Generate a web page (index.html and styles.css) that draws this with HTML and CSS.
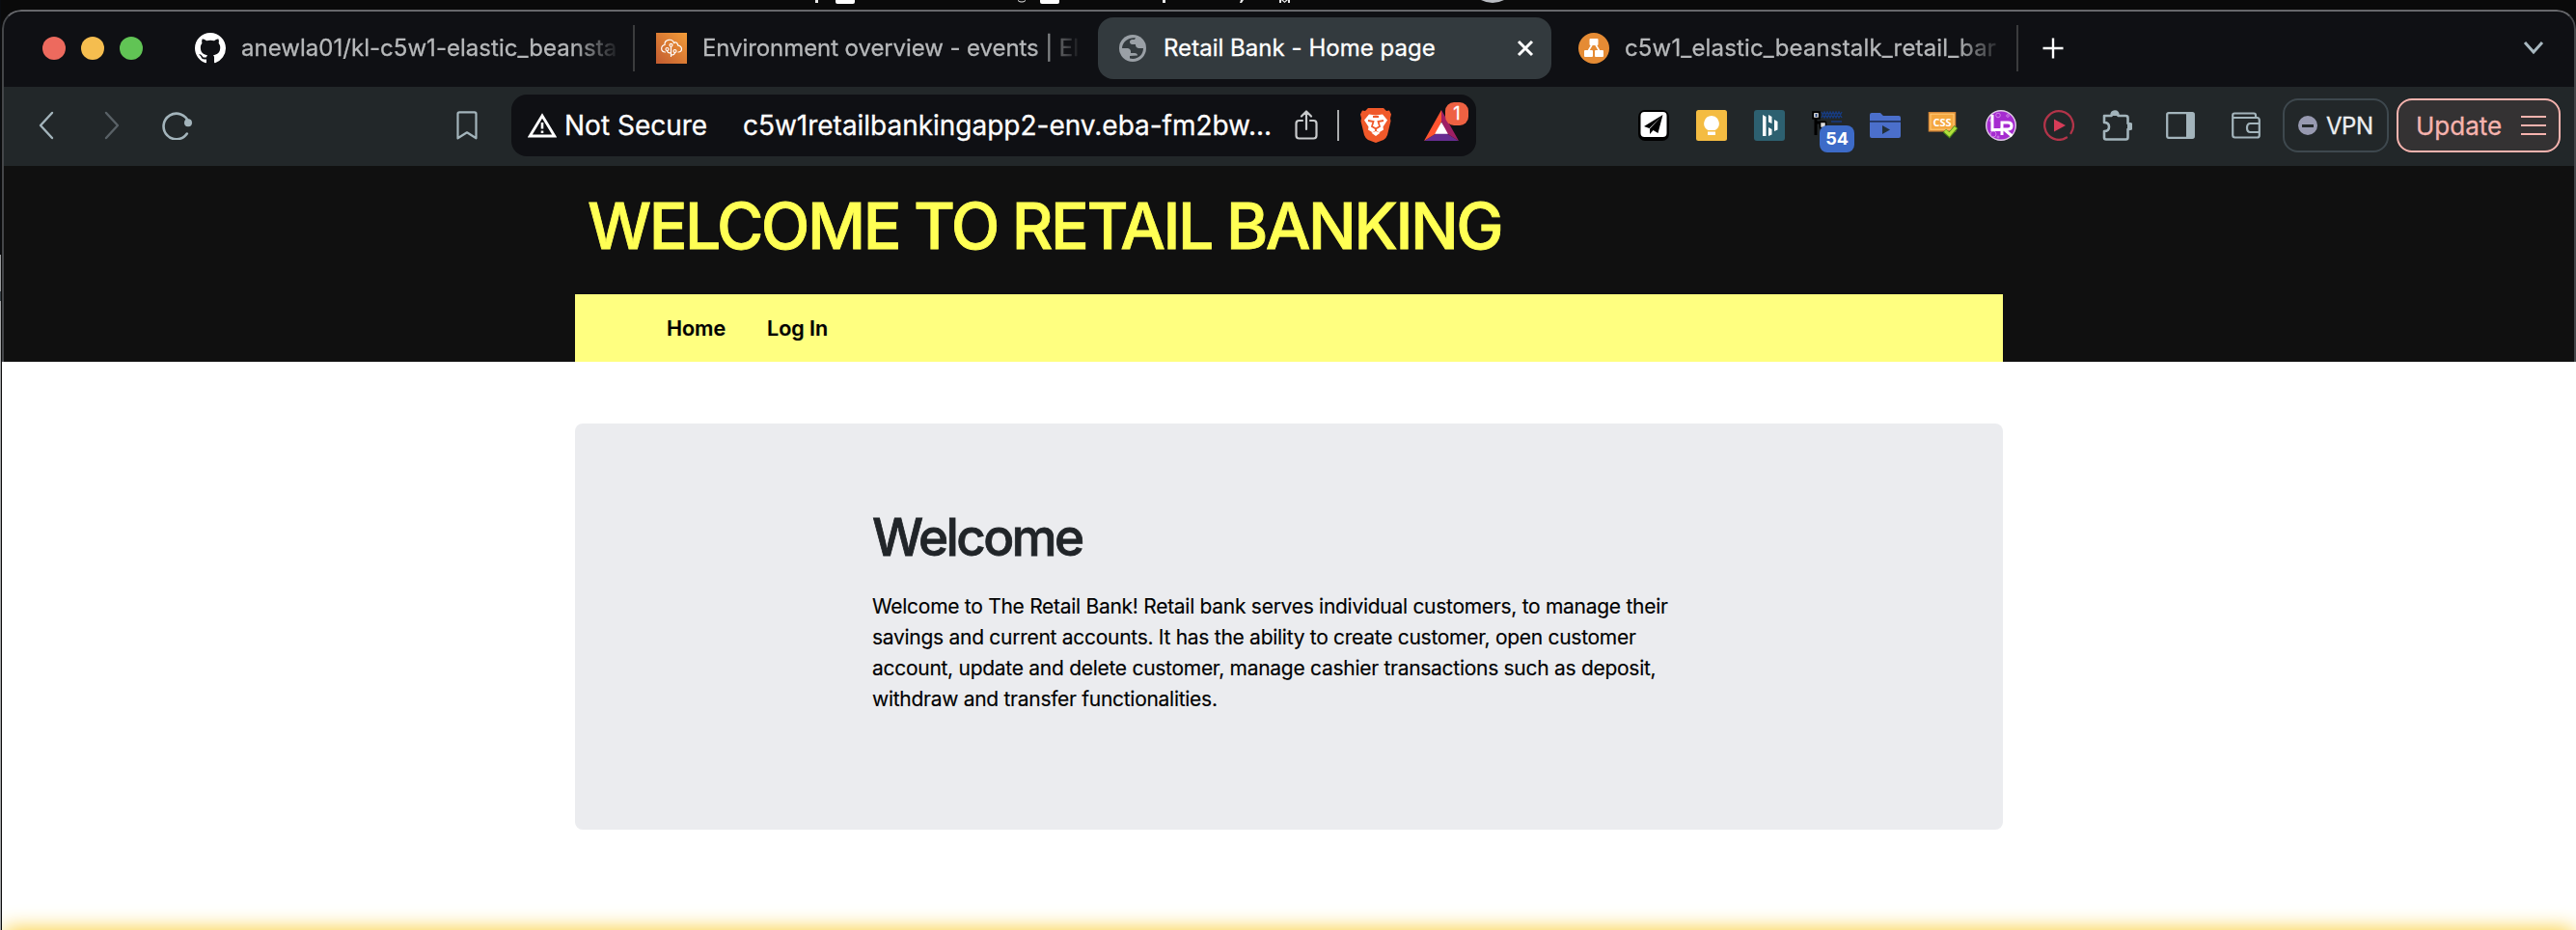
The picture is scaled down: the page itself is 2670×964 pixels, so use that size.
FILE: index.html
```html
<!DOCTYPE html>
<html lang="en">
<head>
<meta charset="utf-8">
<title>Retail Bank - Home page</title>
<link rel="stylesheet" href="styles.css">
</head>
<body>
<svg class="backdrop" viewBox="0 0 2670 10" width="2670" height="10">
  <g fill="#e8e8e8">
    <rect x="845" y="0" width="3" height="3"/><path d="M866 0h20v2q0 2-2 2h-16q-2 0-2-2z" fill="#fff"/>
    <path d="M1055 0q4 3 8 0v1q-4 3-8 0z"/><path d="M1078 0h20v2q0 2-2 2h-16q-2 0-2-2z" fill="#fff"/>
    <rect x="1205" y="0" width="3" height="3"/><path d="M1286 0h3l-2 3h-2z"/><path d="M1326 0h2v3h-2zM1335 0h2v3h-2zM1328 0h2l1.500 1.500L1333 0h2l-3.500 3z"/>
    <path d="M1535 0h24q-12 6-24 0z" fill="#b9bcc2"/>
  </g>
</svg>
<div class="window">
  <header class="tabs">
    <div class="lights"><i class="red"></i><i class="amber"></i><i class="green"></i></div>
    <div class="tab ruled">
      <svg width="32" height="32" viewBox="0 0 16 16"><path fill="#fff" d="M8 0C3.58 0 0 3.58 0 8c0 3.54 2.29 6.53 5.47 7.59.4.07.55-.17.55-.38 0-.19-.01-.82-.01-1.49-2.01.37-2.53-.49-2.69-.94-.09-.23-.48-.94-.82-1.13-.28-.15-.68-.52-.01-.53.63-.01 1.08.58 1.23.82.72 1.21 1.87.87 2.33.66.07-.52.28-.87.51-1.07-1.78-.2-3.64-.89-3.64-3.95 0-.87.31-1.59.82-2.15-.08-.2-.36-1.02.08-2.12 0 0 .67-.21 2.2.82.64-.18 1.32-.27 2-.27s1.36.09 2 .27c1.53-1.04 2.2-.82 2.2-.82.44 1.1.16 1.92.08 2.12.51.56.82 1.27.82 2.15 0 3.07-1.87 3.75-3.65 3.95.29.25.54.73.54 1.48 0 1.07-.01 1.93-.01 2.2 0 .21.15.46.55.38A8.01 8.01 0 0 0 16 8c0-4.42-3.58-8-8-8z"/></svg>
      <span class="label">anewla01/kl-c5w1-elastic_beansta</span>
    </div>
    <div class="tab">
      <svg width="32" height="32" viewBox="0 0 32 32"><defs><linearGradient id="aws" x1="0" y1="1" x2="1" y2="0"><stop stop-color="#c25b30"/><stop offset="1" stop-color="#f39c38"/></linearGradient></defs><rect width="32" height="32" fill="url(#aws)"/><g fill="none" stroke="#fff" stroke-width="1.200" stroke-linecap="round"><path d="M9.500 20C4.500 19.500 4.500 13.500 9 12.500 8.600 6.500 17 5.500 18.500 10.500c2-1.500 4 0 4 2.300 5.500 1.200 5 7.200.5 7.200M15.500 14.500v10M15.500 21c-3 0-4-1-4-2.500M15.500 23c3 0 4-1 4-2.500"/><circle cx="15.500" cy="12.800" r="1.500"/><circle cx="11.500" cy="17" r="1.500"/><circle cx="19.500" cy="19" r="1.500"/></g></svg>
      <span class="label wide">Environment overview - events | El</span>
    </div>
    <div class="tab active">
      <svg width="28" height="28" viewBox="0 0 28 28"><circle cx="14" cy="14" r="14" fill="#9aa0a6"/><path fill="#333a3e" d="M17 3.300C10 2.500 3.200 7 3 14h5.500c2 0 3.500 1.500 3.500 3.500V19h4c2 0 3 1 3 2.500L11 22v2.600c8 1.800 14-3.600 14-10.600h-4.500c-2 0-3.500-1.500-3.500-3.500V10h-3.500c-1.500 0-2.500-1-2.500-2.500S12 5 13.500 5H16z"/></svg>
      <span class="label">Retail Bank - Home page</span>
      <svg class="close" width="18" height="18" viewBox="0 0 18 18"><path d="M2 2l14 14M16 2L2 16" stroke="#fff" stroke-width="3"/></svg>
    </div>
    <div class="tab ruled">
      <svg width="32" height="32" viewBox="0 0 32 32"><circle cx="16" cy="16" r="16" fill="#e58b34"/><path d="M16 9L9 21M16 9l7 12" stroke="#fff" stroke-width="1.700"/><g fill="#fff"><rect x="11.500" y="6" width="9" height="7" rx="1"/><rect x="6" y="18" width="9" height="7" rx="1"/><rect x="17" y="18" width="9" height="7" rx="1"/></g></svg>
      <span class="label last">c5w1_elastic_beanstalk_retail_bar</span>
    </div>
    <svg class="plus" width="22" height="22" viewBox="0 0 22 22"><path d="M11 .5v21M.5 11h21" stroke="#fff" stroke-width="2.400"/></svg>
    <svg class="more" width="22" height="16" viewBox="0 0 22 16"><path d="M2 2l9 10 9-10" fill="none" stroke="#a8b8c0" stroke-width="3"/></svg>
  </header>

  <div class="toolbar">
    <div class="nav">
      <svg width="16" height="30" viewBox="0 0 16 30"><path d="M14 2L2 15l12 13" fill="none" stroke="#a3b4bb" stroke-width="2.400" stroke-linecap="round" stroke-linejoin="round"/></svg>
      <svg width="16" height="30" viewBox="0 0 16 30"><path d="M2 2l12 13L2 28" fill="none" stroke="#596166" stroke-width="2.400" stroke-linecap="round" stroke-linejoin="round"/></svg>
      <svg width="32" height="30" viewBox="0 0 32 30"><path d="M25.800 23.500A13.300 13.300 0 1 1 27.400 11.500" fill="none" stroke="#a3b4bb" stroke-width="2.600" stroke-linecap="round"/><circle cx="27" cy="12.300" r="4" fill="#a3b4bb"/></svg>
    </div>
    <svg class="bookmark" width="22" height="30" viewBox="0 0 22 30"><path d="M1.500 3q0-1.700 1.700-1.700h15.600q1.700 0 1.700 1.700v25.300L11 22.300 1.500 28.300z" fill="none" stroke="#a3b4bb" stroke-width="2.200" stroke-linejoin="round"/></svg>
    <div class="omnibox">
      <svg class="warn" width="30" height="26" viewBox="0 0 30 26"><path d="M15 3L2.300 24h25.400z" fill="none" stroke="#fff" stroke-width="2.800"/><path d="M15 10v6.500M15 18.500v2.500" stroke="#fff" stroke-width="2.600"/></svg>
      <span class="secure">Not Secure</span>
      <span class="url">c5w1retailbankingapp2-env.eba-fm2bw...</span>
      <svg class="share" width="24" height="32" viewBox="0 0 24 32"><g fill="none" stroke="#c8cacc" stroke-width="2.200" stroke-linecap="round" stroke-linejoin="round"><path d="M8 11H4.500Q1.500 11 1.500 14v12.500q0 3 3 3h15q3 0 3-3V14q0-3-3-3H16M12 20V2M7 6.500L12 1.500l5 5"/></g></svg>
      <i class="bar"></i>
      <svg class="brave" width="32" height="36" viewBox="0 0 32 36"><path fill="#f0592a" d="M8 0h16l3 3 3-.5 2 4-1 4 .5 3L28 28q-1 3-4 5l-8 3-8-3q-3-2-4-5L.5 13.500l.5-3-1-4 2-4L5 3z"/><path fill="#fff" d="M9 6.500l7 1 7-1 5 6-4.500 7 .5 3-4.500 2.700L16 23l-3.500 2.200L8 22.500l.5-3-4.500-7zM16 24l4.500 1.800L16 29l-4.500-3.200z"/><path fill="none" stroke="#f0592a" stroke-width="1.800" d="M8 13l5.500 1-1.500 5 4 2.500 4-2.500-1.500-5L24 13M16 21v3M13 9h6"/></svg>
      <div class="bat">
        <svg width="36" height="32" viewBox="0 0 36 32"><path fill="#662d91" d="M0 32h36L23 24H13z"/><path fill="#9e1f63" d="M18 0l18 32-13-8-5-12z"/><path fill="#ff5430" d="M18 0v12l-5 12-13 8z"/><path fill="#fff" d="M18 12.500l6.800 12.300H11.200z"/></svg>
        <b class="count">1</b>
      </div>
    </div>
    <div class="extensions">
      <svg width="32" height="32" viewBox="0 0 32 32"><rect width="32" height="32" rx="7" fill="#000"/><rect x="2.500" y="2" width="27" height="26" rx="4" fill="#fff"/><path d="M25.500 5L6 17l5.500 2zM25.500 5L12 19.500V25l3.500-4 5 3z"/></svg>
      <svg width="32" height="32" viewBox="0 0 32 32"><rect width="32" height="32" rx="2.500" fill="#f4bc42"/><path fill="#fff" d="M16 6a8 8 0 0 1 4 14.800V21h-8v-.2A8 8 0 0 1 16 6zM12 22.500h8V26h-8z"/></svg>
      <svg width="32" height="32" viewBox="0 0 32 32"><rect width="32" height="32" rx="3" fill="#2d6070"/><path fill="#fff" d="M9 5l3.500 2v20H9zM15 5l3.500 2v7L15 12.500zM15 18l3.500 2v5.500L15 27zM21 10l3.500 2v8.500L21 22z"/></svg>
      <div class="ext">
        <svg width="32" height="32" viewBox="0 0 32 32"><path d="M4 8v18M4 13h10" stroke="#000" stroke-width="3"/><rect x="1.200" y="2.200" width="6.500" height="6.500" fill="#fff" stroke="#000" stroke-width="2"/><path d="M4.500 4v3" stroke="#26457f" stroke-width="2"/><rect x="8.500" y="12.500" width="6" height="6" fill="#ddd" stroke="#000" stroke-width="1.500"/><path d="M10 8l3-6 3 6 3-6 3 6 3-6 3 6 3-6M10 2l3 6 3-6 3 6 3-6 3 6 3-6 3 6M20 12h11" fill="none" stroke="#173b80" stroke-width="1.300"/></svg>
        <b class="tally">54</b>
      </div>
      <svg width="32" height="32" viewBox="0 0 32 32"><path fill="#4b6fcb" d="M0 5q0-2 2-2h9l3 3h16q2 0 2 2v19q0 2-2 2H2q-2 0-2-2z"/><path d="M0 11.800h32" stroke="#22355f" stroke-width="1.800"/><path fill="#22303c" d="M13 16l8 4.500-8 4.500z"/></svg>
      <svg width="32" height="32" viewBox="0 0 32 32"><rect x="1.500" y="2.800" width="27" height="19" fill="#f4a73f" stroke="#d98b3a" stroke-width="1.500"/><rect x="3" y="4.200" width="24" height="16" fill="none" stroke="#ffc978"/><text x="15" y="17" text-anchor="middle" class="css">CSS</text><path d="M17.500 21.500l5 4.500 7-8.500" fill="none" stroke="#4d8c1b" stroke-width="5"/><path d="M18 21.500l4.500 4 6.500-7.500" fill="none" stroke="#b3e03b" stroke-width="3.200"/></svg>
      <svg width="32" height="32" viewBox="0 0 32 32"><circle cx="16" cy="16" r="15.300" fill="#a62bd0" stroke="#dec9e4" stroke-width="1.400"/><g fill="none" stroke="#cf82e6"><circle cx="13" cy="5.500" r="2.300"/><circle cx="8" cy="25" r="3"/><circle cx="23" cy="6" r="1.300"/><circle cx="5.500" cy="11" r="1"/><circle cx="13" cy="28" r="1"/></g><path d="M7 5v15.500h10M17 26V13h6q4 0 4 3.500T23 20h-4l8.500 7" fill="none" stroke="#fff" stroke-width="3"/></svg>
      <svg width="32" height="32" viewBox="0 0 32 32"><path d="M24 28.500A14.800 14.800 0 1 1 28.500 24" fill="none" stroke="#b23449" stroke-width="2.300" stroke-linecap="round"/><path fill="#d63c58" d="M11 9.500l12 6.500-12 6.500z"/></svg>
      <svg width="32" height="32" viewBox="0 0 32 32"><path d="M3 6h7.500q0-4.500 3.500-4.500T17.500 6H25q2.500 0 2.500 2v6q4.500-.5 4.500 3t-4.500 3v8.500q0 2-2 2H5q-2 0-2-2V22q5 0 5-4.500T3 13z" fill="none" stroke="#a3b4bb" stroke-width="2.600" stroke-linejoin="round"/><path fill="#a3b4bb" d="M10.500 6q0-5 3.500-5t3.500 5zM27 13.500q4.500 0 4.500 3.500T27 20.500z"/></svg>
      <svg class="panel" width="30" height="28" viewBox="0 0 30 28"><rect x="1.200" y="1.200" width="27.600" height="25.600" rx="1.500" fill="none" stroke="#a3b4bb" stroke-width="2.300"/><path fill="#a3b4bb" d="M21 1h8v26h-8z"/></svg>
      <svg class="wallet" width="30" height="28" viewBox="0 0 30 28"><g fill="none" stroke="#a3b4bb" stroke-width="2.200"><path d="M25 6V3.500q0-2-2-2H3q-1.800 0-1.800 2V24q0 2.500 2.300 2.500h23q2.300 0 2.300-2.300V8.500Q28.800 6 26.500 6H1.500M29 12H19.500q-3.500 0-3.500 4.500t3.500 4.500H29"/></g></svg>
    </div>
    <div class="vpn"><i></i>VPN</div>
    <div class="update">Update<svg width="28" height="22" viewBox="0 0 28 22"><path d="M1 2h26M1 11h26M1 20h26" stroke="#f6b3ae" stroke-width="2.200"/></svg></div>
  </div>

  <main class="page">
    <div class="masthead">
      <div class="container">
        <h1>WELCOME TO RETAIL BANKING</h1>
        <nav class="menu"><a class="home">Home</a><a class="login">Log In</a></nav>
      </div>
    </div>
    <section class="card">
      <h2>Welcome</h2>
      <p>Welcome to The Retail Bank! Retail bank serves individual customers, to manage their<br>savings and current accounts. It has the ability to create customer, open customer<br>account, update and delete customer, manage cashier transactions such as deposit,<br>withdraw and transfer functionalities.</p>
    </section>
    <div class="glow"></div>
  </main>
</div>
</body>
</html>
```
FILE: styles.css
```css
* { box-sizing: border-box; }
body { margin: 0; width: 2670px; height: 964px; overflow: hidden; background: linear-gradient(#0a0c10 264px, #9a9c9e 264px 302px, #3a4248 302px 312px, #a5a7a9 312px) 0 0 / 1px 964px no-repeat #0a0a0a; font-family: Inter, "Liberation Sans", sans-serif; }
svg, i { display: block; flex: none; }
.window { margin-left: 2px; width: 2668px; height: 954px; overflow: hidden; border-radius: 20px 20px 0 0; background: #0f1014; }
.tabs, .toolbar, .masthead { border: 0 solid #444649; border-width: 0 2px; }
.tabs { height: 80px; display: flex; align-items: center; padding: 0 31px 2px 40px; border-top: 2px solid #66676b; border-radius: 20px 20px 0 0; }
.lights { display: flex; gap: 16px; width: 136px; }
.lights i { width: 24px; height: 24px; border-radius: 50%; }
.red { background: #ed6a5e; }
.amber { background: #f5bd4f; }
.green { background: #61c455; }
.tab { width: 478px; height: 48px; flex: none; display: flex; align-items: center; gap: 16px; padding: 0 18px 0 22px; color: #b6b8ba; font-size: 24px; letter-spacing: 0.030px; -webkit-text-stroke: 0.3px; white-space: nowrap; }
.ruled { border-right: 2px solid #3b3c3d; padding-right: 16px; }
.label { flex: 1; min-width: 0; line-height: 40px; -webkit-mask-image: linear-gradient(90deg, #000 88%, transparent 101%); mask-image: linear-gradient(90deg, #000 88%, transparent 101%); }
.wide { letter-spacing: -0.080px; }
.last { letter-spacing: 0.150px; }
.active { width: 470px; height: 64px; margin: 0 6px 0 2px; border-radius: 16px; background: #333a3e; color: #fff; }
.active .label { margin-left: 2px; -webkit-mask-image: none; mask-image: none; }
.plus { margin-left: 25px; }
.more { margin-left: auto; }
.toolbar { height: 82px; display: flex; align-items: center; padding: 0 12px 2px 36px; background: #222729; }
.nav { display: flex; gap: 52px; width: 433px; }
.nav svg:nth-child(3) { margin-left: -8px; }
.omnibox { margin-left: 35px; width: 1000px; height: 64px; border-radius: 16px; background: #0f1014; display: flex; align-items: center; padding-left: 17px; color: #fff; font-size: 28px; -webkit-text-stroke: 0.3px; white-space: nowrap; }
.secure { margin-left: 8px; width: 185px; }
.url { width: 572px; letter-spacing: -0.020px; }
.bar { width: 2px; height: 32px; margin-left: 20px; background: #a9abad; }
.brave { margin-left: 22px; }
.bat { position: relative; margin-left: 34px; }
.count { position: absolute; left: 22px; top: -8px; width: 24px; height: 24px; border-radius: 9px; background: #ee6142; font: 400 18px/24px Inter, sans-serif; text-align: center; }
.extensions { margin-left: 168px; width: 648px; display: flex; align-items: center; gap: 28px; }
.ext { position: relative; }
.tally { position: absolute; left: 8px; top: 16px; width: 36px; height: 28px; border-radius: 8px; background: #3d6bc8; color: #fff; font: 700 18px/28px Inter, sans-serif; text-align: center; }
.css { font: 700 11px "Open Sans", sans-serif; fill: #fff; }
.panel { margin-left: 7px; }
.wallet { margin-left: 10px; }
.vpn { margin-left: 20px; width: 110px; height: 56px; border: 2px solid #3e484e; border-radius: 16px; display: flex; align-items: center; gap: 9px; padding-left: 14px; font-size: 24px; -webkit-text-stroke: 0.3px; letter-spacing: -0.500px; color: #eceef0; }
.vpn i { width: 20px; height: 20px; border-radius: 50%; background: linear-gradient(#222729, #222729) center / 12px 3px no-repeat #9799b0; }
.update { margin-left: 8px; width: 170px; height: 56px; border: 2px solid #f6b3ae; border-radius: 16px; background: #343233; color: #f6b3ae; display: flex; align-items: center; justify-content: space-between; padding: 0 12px 0 18px; font-size: 26px; -webkit-text-stroke: 0.3px; }
.page { height: 792px; background: #fff; display: flex; flex-direction: column; }
.masthead { height: 203px; flex: none; background: #101010; }
.container { width: 1480px; margin-left: 592px; }
h1 { margin: 0; height: 133px; padding: 22px 0 0 13px; font-weight: 500; font-size: 66px; line-height: 80px; letter-spacing: -2.500px; color: #ffff54; -webkit-text-stroke: 0.8px; white-space: nowrap; }
.menu { height: 70px; background: #ffff80; display: flex; align-items: center; padding-left: 95px; font-weight: 600; font-size: 21.500px; -webkit-text-stroke: 0.2px; color: #000; }
.menu a { width: 104px; }
.card { width: 1480px; height: 421px; margin: 64px 0 0 594px; padding: 86px 0 0 308px; border-radius: 8px; background: #ebecef; flex: none; }
h2 { margin: 0; font-weight: 500; font-size: 53px; line-height: 64px; letter-spacing: -2.600px; color: #212529; -webkit-text-stroke: 0.8px; }
p { margin: 24px 0 0; font-size: 21px; line-height: 32px; letter-spacing: -0.280px; -webkit-text-stroke: 0.15px; color: #000; white-space: nowrap; }
.glow { margin: 104px 2px 0; height: 20px; flex: none; box-shadow: 0 0 22px #f9c820; background: #f9c820; }
```
